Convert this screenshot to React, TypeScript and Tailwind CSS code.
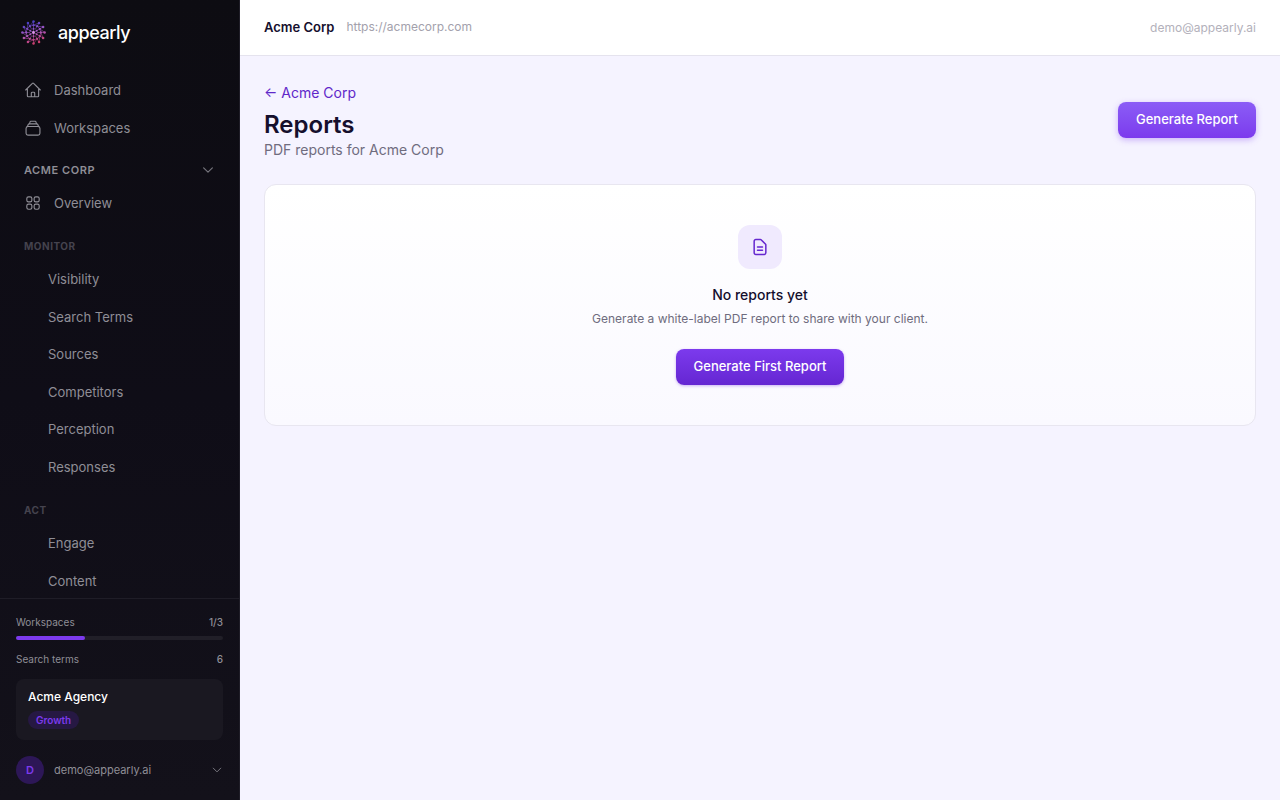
import type { ReactNode } from "react";
import { HiOutlineHome, HiOutlineSquares2X2, HiOutlineChevronDown } from "react-icons/hi2";

const monitorItems = ["Visibility", "Search Terms", "Sources", "Competitors", "Perception", "Responses"];
const actItems = ["Engage", "Content"];

// Rings of nodes around the centre
const rings = [
  { radius: 3.7, count: 6, size: 1 },
  { radius: 7.3, count: 12, size: 1.15 },
  { radius: 11.1, count: 12, size: 1.25 },
];

function point(radius: number, i: number, count: number) {
  const angle = (i / count) * Math.PI * 2 - Math.PI / 2;
  return { x: 12.5 + radius * Math.cos(angle), y: 12.5 + radius * Math.sin(angle) };
}

function Logo() {
  return (
    <svg viewBox="0 0 25 25" className="w-[25px] h-[25px] shrink-0" aria-hidden="true">
      <defs>
        <linearGradient id="logo" gradientUnits="userSpaceOnUse" x1="8" y1="1" x2="15" y2="24">
          <stop offset="0" stopColor="#3f3cc4" />
          <stop offset="0.5" stopColor="#a95ac6" />
          <stop offset="1" stopColor="#cc3c66" />
        </linearGradient>
      </defs>
      <g stroke="url(#logo)" strokeWidth="0.9" opacity="0.65">
        {Array.from({ length: 12 }, (_, i) => {
          const inner = point(i % 2 === 0 ? 0.1 : 3.4, i, 12);
          const outer = point(11.1, i, 12);
          const mid = point(7.3, i, 12);
          const next = point(7.3, i + 1, 12);
          const outerNext = point(11.1, i + 1, 12);
          return (
            <g key={i}>
              <line x1={inner.x} y1={inner.y} x2={outer.x} y2={outer.y} />
              <line x1={mid.x} y1={mid.y} x2={next.x} y2={next.y} />
              <line x1={mid.x} y1={mid.y} x2={outerNext.x} y2={outerNext.y} />
            </g>
          );
        })}
      </g>
      <g fill="url(#logo)">
        {rings.map((ring) =>
          Array.from({ length: ring.count }, (_, i) => {
            const p = point(ring.radius, i, ring.count);
            return <circle key={`${ring.radius}-${i}`} cx={p.x} cy={p.y} r={ring.size} />;
          })
        )}
      </g>
      <circle cx="12.5" cy="12.5" r="1.4" fill="#dc96e8" />
    </svg>
  );
}

function StackIcon() {
  return (
    <svg
      viewBox="0 0 24 24"
      fill="none"
      stroke="currentColor"
      strokeWidth="1.5"
      strokeLinecap="round"
      strokeLinejoin="round"
      className="w-[18px] h-[18px] shrink-0"
      aria-hidden="true"
    >
      <rect x="2.75" y="10" width="18.5" height="11.5" rx="2.5" />
      <path d="M4.5 10.2 5.6 7.4A1.5 1.5 0 0 1 7 6.5h10a1.5 1.5 0 0 1 1.4.9l1.1 2.8" />
      <path d="M7.5 6.3 8 4a1.2 1.2 0 0 1 1.2-1h5.6A1.2 1.2 0 0 1 16 4l.5 2.3" />
    </svg>
  );
}

function DocumentIcon() {
  return (
    <svg
      viewBox="0 0 24 24"
      fill="none"
      stroke="currentColor"
      strokeWidth="1.8"
      strokeLinecap="round"
      strokeLinejoin="round"
      className="w-5 h-5"
      aria-hidden="true"
    >
      <path d="M9 12h6m-6 4h6m2 5H7a2 2 0 0 1-2-2V5a2 2 0 0 1 2-2h5.586a1 1 0 0 1 .707.293l5.414 5.414a1 1 0 0 1 .293.707V19a2 2 0 0 1-2 2z" />
    </svg>
  );
}

function NavLink({ icon, label }: { icon: ReactNode; label: string }) {
  return (
    <a
      href="#"
      className="flex items-center gap-3 px-3 py-2 rounded-lg text-[13px] leading-5 text-[#8f8e96] hover:text-white"
    >
      {icon}
      <span>{label}</span>
    </a>
  );
}

function NavGroup({ title, items }: { title: string; items: string[] }) {
  return (
    <div className="pt-[9px]">
      <p className="px-3 py-2 text-[10px] leading-4 font-bold tracking-wider text-[#45434e] uppercase">
        {title}
      </p>
      <div className="flex flex-col gap-0.5">
        {items.map((item) => (
          <a
            key={item}
            href="#"
            className="pl-9 pr-3 py-2 rounded-lg text-[13px] leading-normal text-[#8f8e96] hover:text-white"
          >
            {item}
          </a>
        ))}
      </div>
    </div>
  );
}

function Sidebar() {
  return (
    <aside className="w-60 shrink-0 flex flex-col bg-linear-to-b from-[#0d0c12] via-[#0f0d17] to-[#13111a] border-r border-[#1f1d27]">
      {/* Brand */}
      <a href="#" className="flex items-center gap-3 h-[65px] px-[21px] shrink-0">
        <Logo />
        <span className="text-lg font-medium tracking-tight text-white">appearly</span>
      </a>

      {/* Nav */}
      <nav className="flex-1 min-h-0 overflow-hidden px-3 pt-[7px]">
        <div className="flex flex-col gap-0.5">
          <NavLink icon={<HiOutlineHome className="w-[18px] h-[18px] shrink-0" />} label="Dashboard" />
          <NavLink icon={<StackIcon />} label="Workspaces" />
        </div>
        <button className="w-full h-[30px] flex items-center justify-between mt-[9px] px-3 text-[11px] font-semibold tracking-wider text-[#8f8e96] uppercase">
          <span>Acme Corp</span>
          <HiOutlineChevronDown className="w-3.5 h-3.5 stroke-2 text-[#76757d]" />
        </button>
        <NavLink icon={<HiOutlineSquares2X2 className="w-[18px] h-[18px] shrink-0" />} label="Overview" />
        <NavGroup title="Monitor" items={monitorItems} />
        <NavGroup title="Act" items={actItems} />
      </nav>

      {/* Usage and account */}
      <div className="shrink-0 border-t border-[#1f1d27] px-4 pt-[15px] pb-4 text-[10px] leading-4 text-[#8f8e96]">
        <div className="flex justify-between">
          <span>Workspaces</span>
          <span className="font-medium">1/3</span>
        </div>
        <div className="mt-1.5 h-1 rounded-full bg-[#211f28]">
          <div className="h-1 w-1/3 rounded-full bg-[#7c3aed]" />
        </div>
        <div className="mt-[11px] flex justify-between">
          <span>Search terms</span>
          <span className="font-medium">6</span>
        </div>
        <div className="mt-3 flex flex-col items-start gap-1 rounded-lg bg-[#1a1821] px-3 pt-2 pb-[11px]">
          <p className="text-xs leading-5 font-medium text-white">Acme Agency</p>
          <span className="px-2 py-px rounded-full bg-[#261843] font-semibold text-[#7c3aed]">Growth</span>
        </div>
        <button className="mt-4 w-full flex items-center gap-[10px]">
          <span className="w-7 h-7 rounded-full bg-[#2d1757] flex items-center justify-center text-[11px] font-semibold text-[#7c3aed]">
            D
          </span>
          <span className="flex-1 text-left text-[11px]">demo@appearly.ai</span>
          <HiOutlineChevronDown className="w-3 h-3 stroke-2 text-[#76757d]" />
        </button>
      </div>
    </aside>
  );
}

export default function App() {
  return (
    <div className="flex h-screen font-['Inter',sans-serif] bg-[#f5f3ff] text-[#150f2d]">
      <Sidebar />

      <div className="flex-1 min-w-0 flex flex-col">
        {/* Top bar */}
        <header className="h-14 shrink-0 flex items-center justify-between px-6 bg-white border-b border-[#e5e3ee] text-xs">
          <div className="flex items-center gap-3">
            <span className="text-[13px] font-semibold">Acme Corp</span>
            <a href="#" className="text-[#a3a1ac]">https://acmecorp.com</a>
          </div>
          <span className="text-[#b3b1bb]">demo@appearly.ai</span>
        </header>

        {/* Page content */}
        <main className="flex-1 px-6 pt-6 overflow-auto">
          <div className="flex items-center justify-between">
            <div>
              <a href="#" className="block text-sm leading-[26px] text-[#6027c9]">← Acme Corp</a>
              <h1 className="mt-1 text-2xl leading-[30px] font-semibold">Reports</h1>
              <p className="text-sm leading-5 text-[#6f6c7e]">PDF reports for Acme Corp</p>
            </div>
            <button className="h-9 px-[18px] rounded-lg bg-linear-to-b from-[#8b5cf6] to-[#7c3aed] text-[13px] font-medium text-white shadow-[0_2px_6px_rgba(124,58,237,0.35)]">
              Generate Report
            </button>
          </div>

          <section className="mt-6 flex flex-col items-center rounded-xl border border-[#e8e6f0] bg-linear-to-b from-white to-[#faf9ff] py-10">
            <div className="w-11 h-11 rounded-xl bg-[#f0eafe] flex items-center justify-center text-[#6527cf]">
              <DocumentIcon />
            </div>
            <h2 className="mt-4 text-sm leading-5 font-medium">No reports yet</h2>
            <p className="mt-1 text-xs leading-5 text-[#6f6c7e]">
              Generate a white-label PDF report to share with your client.
            </p>
            <button className="mt-5 h-9 px-[18px] rounded-lg bg-linear-to-b from-[#7c3aed] to-[#6526d2] text-[13px] font-medium text-white shadow-[0_1px_3px_rgba(109,40,217,0.35)]">
              Generate First Report
            </button>
          </section>
        </main>
      </div>
    </div>
  );
}
